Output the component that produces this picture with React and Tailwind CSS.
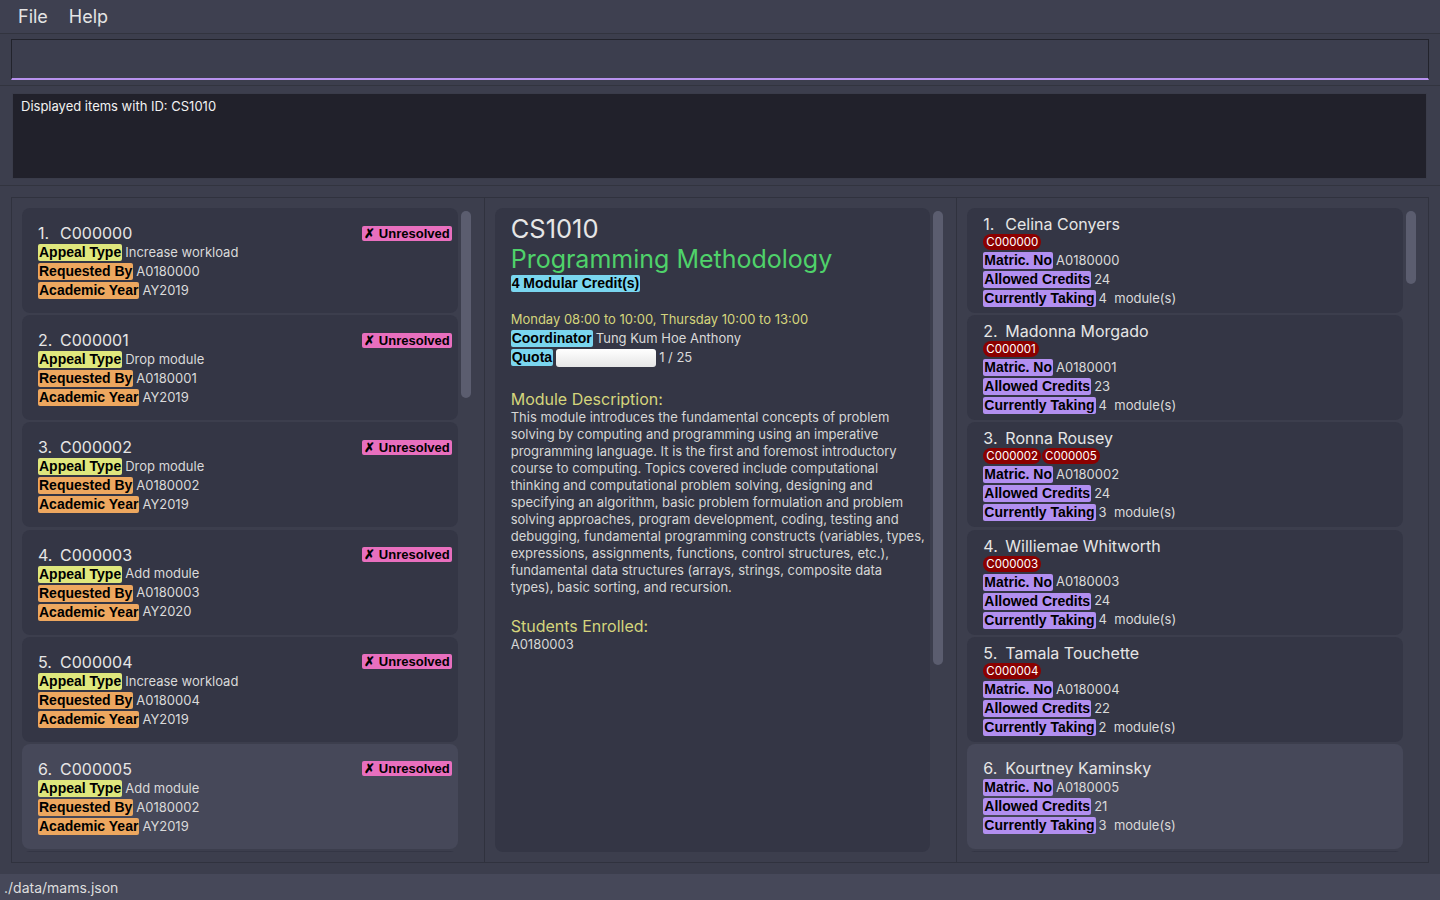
import React from 'react'

const appeals = [
  { id: 'C000000', type: 'Increase workload', by: 'A0180000', year: 'AY2019' },
  { id: 'C000001', type: 'Drop module', by: 'A0180001', year: 'AY2019' },
  { id: 'C000002', type: 'Drop module', by: 'A0180002', year: 'AY2019' },
  { id: 'C000003', type: 'Add module', by: 'A0180003', year: 'AY2020' },
  { id: 'C000004', type: 'Increase workload', by: 'A0180004', year: 'AY2019' },
  { id: 'C000005', type: 'Add module', by: 'A0180002', year: 'AY2019' },
]

const students = [
  { name: 'Celina Conyers', tags: ['C000000'], matric: 'A0180000', credits: 24, taking: 4 },
  { name: 'Madonna Morgado', tags: ['C000001'], matric: 'A0180001', credits: 23, taking: 4 },
  { name: 'Ronna Rousey', tags: ['C000002', 'C000005'], matric: 'A0180002', credits: 24, taking: 3 },
  { name: 'Williemae Whitworth', tags: ['C000003'], matric: 'A0180003', credits: 24, taking: 4 },
  { name: 'Tamala Touchette', tags: ['C000004'], matric: 'A0180004', credits: 22, taking: 2 },
  { name: 'Kourtney Kaminsky', tags: [], matric: 'A0180005', credits: 21, taking: 3 },
]

const description = [
  'This module introduces the fundamental concepts of problem',
  'solving by computing and programming using an imperative',
  'programming language. It is the first and foremost introductory',
  'course to computing. Topics covered include computational',
  'thinking and computational problem solving, designing and',
  'specifying an algorithm, basic problem formulation and problem',
  'solving approaches, program development, coding, testing and',
  'debugging, fundamental programming constructs (variables, types,',
  'expressions, assignments, functions, control structures, etc.),',
  'fundamental data structures (arrays, strings, composite data',
  'types), basic sorting, and recursion.',
]

function Label({ bg, children }) {
  return (
    <span className={`${bg} inline-block rounded-[2px] px-[1px] h-[17px] leading-[17px] text-[14px] font-bold text-black font-['Liberation_Sans',Arial,sans-serif] mr-[3px]`}>
      {children}
    </span>
  )
}

function Row({ bg, label, children }) {
  return (
    <div className="flex items-center h-[17px] mt-[2px]">
      <Label bg={bg}>{label}</Label>
      <span className="text-[13px] text-[#dadada]">{children}</span>
    </div>
  )
}

function Scroll({ h }) {
  return (
    <div className="w-[10px] ml-[3px] pt-[3px] shrink-0">
      <div className={`${h} w-full rounded-full bg-[#5b5d6f]`} />
    </div>
  )
}

function AppealCard({ a, i }) {
  const last = i === 5
  return (
    <div className={`h-[105px] shrink-0 rounded-[8px] ${last ? 'bg-[#464859]' : 'bg-[#343645]'} pl-[16px] pr-[6px] flex flex-col justify-center`}>
      <div className="flex items-center justify-between h-[18px] mt-[2px]">
        <div className="text-[16px] text-[#e6e6e6] leading-[18px]">
          <span className="inline-block w-[22px]">{i + 1}.</span>{a.id}
        </div>
        <span className="bg-[#e86fbe] rounded-[2px] px-[2px] h-[15px] leading-[15px] text-[13px] font-bold text-black font-['Liberation_Sans',Arial,sans-serif]">
          ✗ Unresolved
        </span>
      </div>
      <Row bg="bg-[#dfe77d]" label="Appeal Type">{a.type}</Row>
      <Row bg="bg-[#eda75f]" label="Requested By">{a.by}</Row>
      <Row bg="bg-[#eda75f]" label="Academic Year">{a.year}</Row>
    </div>
  )
}

function StudentCard({ s, i }) {
  const last = i === 5
  return (
    <div className={`h-[105px] shrink-0 rounded-[8px] ${last ? 'bg-[#464859]' : 'bg-[#343645]'} pl-[16px] flex flex-col justify-center`}>
      <div className="text-[16px] text-[#e6e6e6] leading-[18px] mt-[1px]">
        <span className="inline-block w-[22px]">{i + 1}.</span>{s.name}
      </div>
      {s.tags.length > 0 && (
        <div className="flex gap-[1px] mt-[1px]">
          {s.tags.map(t => (
            <span key={t} className="bg-[#8b0000] rounded-full px-[3px] h-[16px] leading-[16px] text-[11.5px] text-white">{t}</span>
          ))}
        </div>
      )}
      <Row bg="bg-[#b28ff0]" label="Matric. No">{s.matric}</Row>
      <Row bg="bg-[#b28ff0]" label="Allowed Credits">{s.credits}</Row>
      <Row bg="bg-[#b28ff0]" label="Currently Taking">{s.taking}&nbsp;&nbsp;module(s)</Row>
    </div>
  )
}

export default function App() {
  return (
    <div className="w-[1440px] h-[900px] overflow-hidden flex flex-col bg-[#3c3e4d] font-['Inter',sans-serif]">
      {/* menu */}
      <div className="h-[34px] shrink-0 bg-[#3e4050] border-b border-[#32343f] flex items-center gap-[21px] pl-[18px] text-[18px] text-[#e4e4e4]">
        <span>File</span>
        <span>Help</span>
      </div>

      {/* command box */}
      <div className="h-[52px] shrink-0 border-b border-[#32343f] pt-[5px] px-[11px]">
        <div className="h-[41px] border border-b-2 border-[#22232c] border-b-[#b892ee] bg-[#3c3e4e]" />
      </div>

      {/* result display */}
      <div className="h-[100px] shrink-0 border-b border-[#32343f] pt-[7px] pl-[12px] pr-[13px]">
        <div className="h-[86px] bg-[#21212b] border border-[#3a3c4a] px-[8px] pt-[3px] text-[13px] text-[#f2f2f2]">
          Displayed items with ID: CS1010
        </div>
      </div>

      {/* main */}
      <div className="flex-1 px-[11px] py-[11px] min-h-0">
        <div className="h-full border border-[#30323e] flex">
          {/* appeals */}
          <div className="flex-1 flex pl-[10px] pr-[13px] py-[10px] min-w-0">
            <div className="flex-1 flex flex-col gap-[2.2px] overflow-hidden">
              {appeals.map((a, i) => <AppealCard key={a.id} a={a} i={i} />)}
              <div className="h-[105px] shrink-0 rounded-[8px] bg-[#343645]" />
            </div>
            <Scroll h="h-[187px]" />
          </div>

          {/* module */}
          <div className="flex-1 flex pl-[10px] pr-[13px] py-[10px] border-l border-[#30323e] min-w-0">
            <div className="flex-1 rounded-[8px] bg-[#343645] pl-[16px] pt-[6px] overflow-hidden">
              <div className="text-[25.5px] leading-[30px] text-[#e6e6e6]">CS1010</div>
              <div className="text-[25px] leading-[30px] text-[#4fd26a]">Programming Methodology</div>
              <div className="flex h-[17px] mt-[1px]"><Label bg="bg-[#7ad6ef]">4 Modular Credit(s)</Label></div>
              <div className="mt-[19px] text-[13px] leading-[17px] text-[#d5d57c]">Monday 08:00 to 10:00, Thursday 10:00 to 13:00</div>
              <Row bg="bg-[#7ad6ef]" label="Coordinator">Tung Kum Hoe Anthony</Row>
              <div className="flex items-center h-[17px] mt-[2px]">
                <Label bg="bg-[#7ad6ef]">Quota</Label>
                <div className="w-[100px] h-[18px] rounded-[3px] bg-gradient-to-b from-white to-[#e6e6e6] mr-[3px] shrink-0" />
                <span className="text-[13px] text-[#dadada]">1 / 25</span>
              </div>
              <div className="mt-[23px] text-[16px] leading-[20px] text-[#d5d57c]">Module Description:</div>
              <div className="text-[13px] leading-[17px] text-[#d6d6d6]">
                {description.map(l => <div key={l} className="whitespace-nowrap">{l}</div>)}
              </div>
              <div className="mt-[20px] text-[16px] leading-[20px] text-[#d5d57c]">Students Enrolled:</div>
              <div className="text-[13px] leading-[17px] text-[#d6d6d6]">A0180003</div>
            </div>
            <Scroll h="h-[454px]" />
          </div>

          {/* students */}
          <div className="flex-1 flex pl-[10px] pr-[12px] py-[10px] border-l border-[#30323e] min-w-0">
            <div className="flex-1 flex flex-col gap-[2.2px] overflow-hidden">
              {students.map((s, i) => <StudentCard key={s.matric} s={s} i={i} />)}
              <div className="h-[105px] shrink-0 rounded-[8px] bg-[#343645]" />
            </div>
            <Scroll h="h-[73px]" />
          </div>
        </div>
      </div>

      {/* status */}
      <div className="h-[26px] shrink-0 bg-[#464859] flex items-center pl-[4px] text-[14px] text-[#dedede]">
        ./data/mams.json
      </div>
    </div>
  )
}
